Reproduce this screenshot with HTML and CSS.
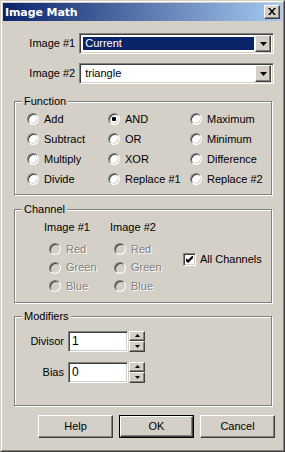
FILE: index.html
```html
<!DOCTYPE html>
<html lang="en">

<head>
    <meta charset="UTF-8">
    <meta name="viewport" content="width=device-width, initial-scale=1.0">
    <title>Image Math</title>
    <link rel="stylesheet" href="styles.css">
</head>

<body>
    <div class="window">
        <div class="frame">
            <div class="titlebar">
                <span class="title">Image Math</span>
                <span class="btn close">
                    <svg width="8" height="7" viewBox="0 0 8 7">
                        <path d="M0 0h2l2 2.5l2-2.5h2l-3 3.5l3 3.5h-2l-2-2.5l-2 2.5h-2l3-3.5z" fill="#000" />
                    </svg>
                </span>
            </div>

            <div class="content">
                <div class="combo-row">
                    <span class="lbl">Image #1</span>
                    <div class="combo">
                        <div class="combo-text selected"><span>Current</span></div>
                        <span class="btn drop"><svg width="7" height="4" viewBox="0 0 7 4"><path d="M0 0h7l-3.5 4z" fill="#000" /></svg></span>
                    </div>
                </div>
                <div class="combo-row">
                    <span class="lbl">Image #2</span>
                    <div class="combo">
                        <div class="combo-text"><span>triangle</span></div>
                        <span class="btn drop"><svg width="7" height="4" viewBox="0 0 7 4"><path d="M0 0h7l-3.5 4z" fill="#000" /></svg></span>
                    </div>
                </div>

                <fieldset class="group function">
                    <legend>Function</legend>
                    <div class="radio-grid">
                        <div class="radio"><span class="dot"></span>Add</div>
                        <div class="radio"><span class="dot on"></span>AND</div>
                        <div class="radio"><span class="dot"></span>Maximum</div>
                        <div class="radio"><span class="dot"></span>Subtract</div>
                        <div class="radio"><span class="dot"></span>OR</div>
                        <div class="radio"><span class="dot"></span>Minimum</div>
                        <div class="radio"><span class="dot"></span>Multiply</div>
                        <div class="radio"><span class="dot"></span>XOR</div>
                        <div class="radio"><span class="dot"></span>Difference</div>
                        <div class="radio"><span class="dot"></span>Divide</div>
                        <div class="radio"><span class="dot"></span>Replace #1</div>
                        <div class="radio"><span class="dot"></span>Replace #2</div>
                    </div>
                </fieldset>

                <fieldset class="group channel">
                    <legend>Channel</legend>
                    <div class="channel-cols">
                        <div class="chan-col">
                            <div class="chan-head">Image #1</div>
                            <div class="radio off"><span class="dot"></span>Red</div>
                            <div class="radio off"><span class="dot"></span>Green</div>
                            <div class="radio off"><span class="dot"></span>Blue</div>
                        </div>
                        <div class="chan-col second">
                            <div class="chan-head">Image #2</div>
                            <div class="radio off"><span class="dot"></span>Red</div>
                            <div class="radio off"><span class="dot"></span>Green</div>
                            <div class="radio off"><span class="dot"></span>Blue</div>
                        </div>
                        <div class="check">
                            <span class="box">
                                <svg width="7" height="7" viewBox="0 0 7 7">
                                    <path d="M0 2v3l2 2l5-5v-3l-5 5z" fill="#000" />
                                </svg>
                            </span>
                            All Channels
                        </div>
                    </div>
                </fieldset>

                <fieldset class="group modifiers">
                    <legend>Modifiers</legend>
                    <div class="spin-row">
                        <span class="lbl">Divisor</span>
                        <div class="edit">1</div>
                        <div class="spin">
                            <span class="btn"><svg width="5" height="3" viewBox="0 0 5 3"><path d="M0 3h5l-2.5-3z" fill="#000" /></svg></span>
                            <span class="btn"><svg width="5" height="3" viewBox="0 0 5 3"><path d="M0 0h5l-2.5 3z" fill="#000" /></svg></span>
                        </div>
                    </div>
                    <div class="spin-row">
                        <span class="lbl">Bias</span>
                        <div class="edit">0</div>
                        <div class="spin">
                            <span class="btn"><svg width="5" height="3" viewBox="0 0 5 3"><path d="M0 3h5l-2.5-3z" fill="#000" /></svg></span>
                            <span class="btn"><svg width="5" height="3" viewBox="0 0 5 3"><path d="M0 0h5l-2.5 3z" fill="#000" /></svg></span>
                        </div>
                    </div>
                </fieldset>

                <div class="buttons">
                    <span class="btn push">Help</span>
                    <span class="default"><span class="btn push">OK</span></span>
                    <span class="btn push">Cancel</span>
                </div>
            </div>
        </div>
    </div>
</body>

</html>
```

FILE: styles.css
```css
* {
    margin: 0;
    padding: 0;
    box-sizing: border-box;
}

html,
body {
    width: 285px;
    height: 452px;
    overflow: hidden;
    background-color: #d4d0c8;
}

body {
    font-family: 'Liberation Sans', Arial, sans-serif;
    font-size: 11px;
    line-height: 13px;
    color: #000;
}

/* window frame */
.window {
    width: 285px;
    height: 452px;
    border: 1px solid;
    border-color: #d4d0c8 #404040 #404040 #d4d0c8;
}

.frame {
    height: 100%;
    border: 1px solid;
    border-color: #fff #808080 #808080 #fff;
    padding: 1px;
}

.titlebar {
    height: 18px;
    display: flex;
    align-items: center;
    justify-content: space-between;
    padding: 0 2px 0 2px;
    background: linear-gradient(to right, #0a246a, #a6caf0);
}

.title {
    color: #fff;
    font-family: 'DejaVu Sans', sans-serif;
    font-weight: bold;
    font-size: 11px;
    letter-spacing: -0.1px;
}

/* raised 3d button look */
.btn {
    display: flex;
    align-items: center;
    justify-content: center;
    background-color: #d4d0c8;
    border: 1px solid;
    border-color: #fff #404040 #404040 #fff;
    box-shadow: inset -1px -1px 0 #808080;
}

.close {
    width: 16px;
    height: 14px;
    padding-bottom: 1px;
}

.content {
    padding: 12px 8px 0 11px;
}

/* combo boxes */
.combo-row {
    display: flex;
    align-items: center;
    margin-bottom: 9px;
}

.combo-row .lbl {
    width: 70px;
    text-align: right;
    margin-left: -8px;
    margin-right: 4px;
}

.combo {
    width: 197px;
    height: 21px;
    display: flex;
    background-color: #fff;
    border: 1px solid;
    border-color: #808080 #fff #fff #808080;
    box-shadow: inset 1px 1px 0 #404040, inset -1px -1px 0 #d4d0c8;
    padding: 2px;
}

.combo-text {
    flex: 1;
    display: flex;
    align-items: center;
    padding: 1px;
}

.combo-text span {
    flex: 1;
    height: 100%;
    padding-left: 2px;
    line-height: 13px;
}

.combo-text.selected span {
    background-color: #0a246a;
    color: #fff;
}

.drop {
    width: 16px;
    height: 17px;
    flex: none;
    margin-top: -1px;
}

/* group boxes */
.group {
    width: 258px;
    border: 1px solid #808080;
    box-shadow: inset 1px 1px 0 #fff, 1px 1px 0 #fff;
    min-inline-size: 0;
    padding: 0;
}

.group legend {
    margin-left: 7px;
    padding: 0 2px;
    background-color: #d4d0c8;
    line-height: 13px;
}

.function {
    margin-top: 11px;
    padding-bottom: 5px;
}

.radio-grid {
    display: grid;
    grid-template-columns: 81px 82px auto;
    grid-auto-rows: 20px;
    padding: 1px 0 0 12px;
}

.radio {
    display: flex;
    align-items: center;
    gap: 5px;
}

.dot {
    width: 12px;
    height: 12px;
    border-radius: 50%;
    border: 1px solid;
    border-color: #808080 #fff #fff #808080;
    box-shadow: inset 1px 1px 0 #404040, inset -1px -1px 0 #d4d0c8;
    background-color: #fff;
    display: flex;
    align-items: center;
    justify-content: center;
}

.dot.on::after {
    content: "";
    width: 4px;
    height: 4px;
    border-radius: 1px;
    background-color: #000;
}

.radio.off {
    color: #808080;
    text-shadow: 1px 1px 0 #fff;
    height: 18.5px;
}

.radio.off .dot {
    background-color: #d4d0c8;
}

.channel {
    margin-top: 8px;
    padding-bottom: 6px;
}

.channel-cols {
    display: flex;
    padding: 5px 0 0 29px;
}

.chan-col {
    width: 66px;
}

.chan-col.second {
    width: 73px;
}

.chan-head {
    margin-bottom: 6px;
}

.chan-col .radio {
    padding-left: 5px;
}

.chan-col.second .radio {
    padding-left: 4px;
}

.check {
    display: flex;
    align-items: center;
    gap: 4px;
    margin-top: 32px;
    height: 13px;
}

.box {
    width: 13px;
    height: 13px;
    background-color: #fff;
    border: 1px solid;
    border-color: #808080 #fff #fff #808080;
    box-shadow: inset 1px 1px 0 #404040, inset -1px -1px 0 #d4d0c8;
    display: flex;
    align-items: center;
    justify-content: center;
}

/* spinner edits */
.modifiers {
    margin-top: 7px;
    padding-bottom: 22px;
}

.spin-row {
    display: flex;
    align-items: center;
    height: 21px;
}

.spin-row:first-of-type {
    margin-top: 8px;
}

.spin-row + .spin-row {
    margin-top: 10px;
}

.spin-row .lbl {
    width: 49px;
    text-align: right;
    margin-right: 4px;
}

.edit {
    width: 60px;
    height: 21px;
    background-color: #fff;
    border: 1px solid;
    border-color: #808080 #fff #fff #808080;
    box-shadow: inset 1px 1px 0 #404040, inset -1px -1px 0 #d4d0c8;
    padding: 3px 0 0 3px;
    font-size: 12px;
}

.spin {
    margin-left: 1px;
    width: 16px;
    height: 21px;
    display: flex;
    flex-direction: column;
}

.spin .btn {
    height: 10.5px;
}

/* bottom buttons */
.buttons {
    width: 261px;
    margin-top: 9px;
    display: flex;
    justify-content: flex-end;
    gap: 6px;
}

.push {
    width: 75px;
    height: 23px;
}

.default {
    display: flex;
    border: 1px solid #000;
}

.default .push {
    width: 73px;
    height: 21px;
}
```
